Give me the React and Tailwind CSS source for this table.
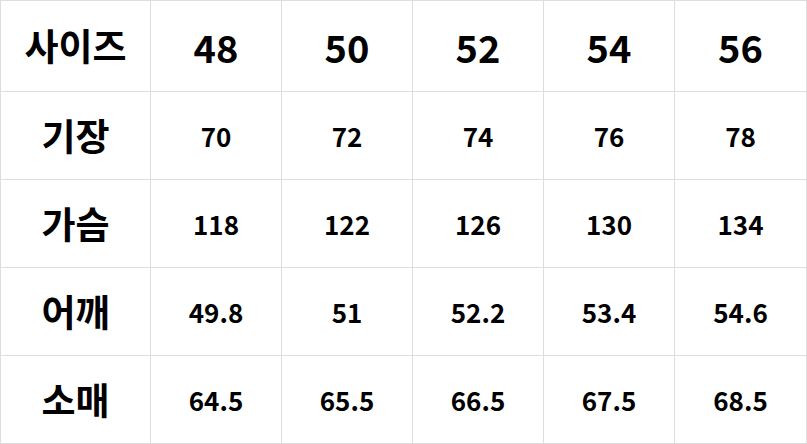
import React from 'react';

const SIZES = ['48', '50', '52', '54', '56'];

const ROWS = [
  { label: '기장', values: ['70', '72', '74', '76', '78'] },
  { label: '가슴', values: ['118', '122', '126', '130', '134'] },
  { label: '어깨', values: ['49.8', '51', '52.2', '53.4', '54.6'] },
  { label: '소매', values: ['64.5', '65.5', '66.5', '67.5', '68.5'] },
];

const FONT = { fontFamily: '"Noto Sans CJK KR", "Noto Sans", sans-serif' };

export default function App() {
  return (
    <div className="w-[807px] h-[444px] bg-white" style={FONT}>
      <div className="grid grid-cols-[149px_130px_130px_130px_130px_131px] grid-rows-[90px_87px_87px_87px_87px] gap-px p-px bg-[#dddddd] text-black font-bold">
        <div className="bg-white flex items-center justify-center text-[37px]">사이즈</div>
        {SIZES.map((s) => (
          <div key={s} className="bg-white flex items-center justify-center text-[38px]">{s}</div>
        ))}
        {ROWS.map((row) => (
          <React.Fragment key={row.label}>
            <div className="bg-white flex items-center justify-center text-[37px]">{row.label}</div>
            {row.values.map((v, i) => (
              <div key={i} className="bg-white flex items-center justify-center text-[26px]">{v}</div>
            ))}
          </React.Fragment>
        ))}
      </div>
    </div>
  );
}
